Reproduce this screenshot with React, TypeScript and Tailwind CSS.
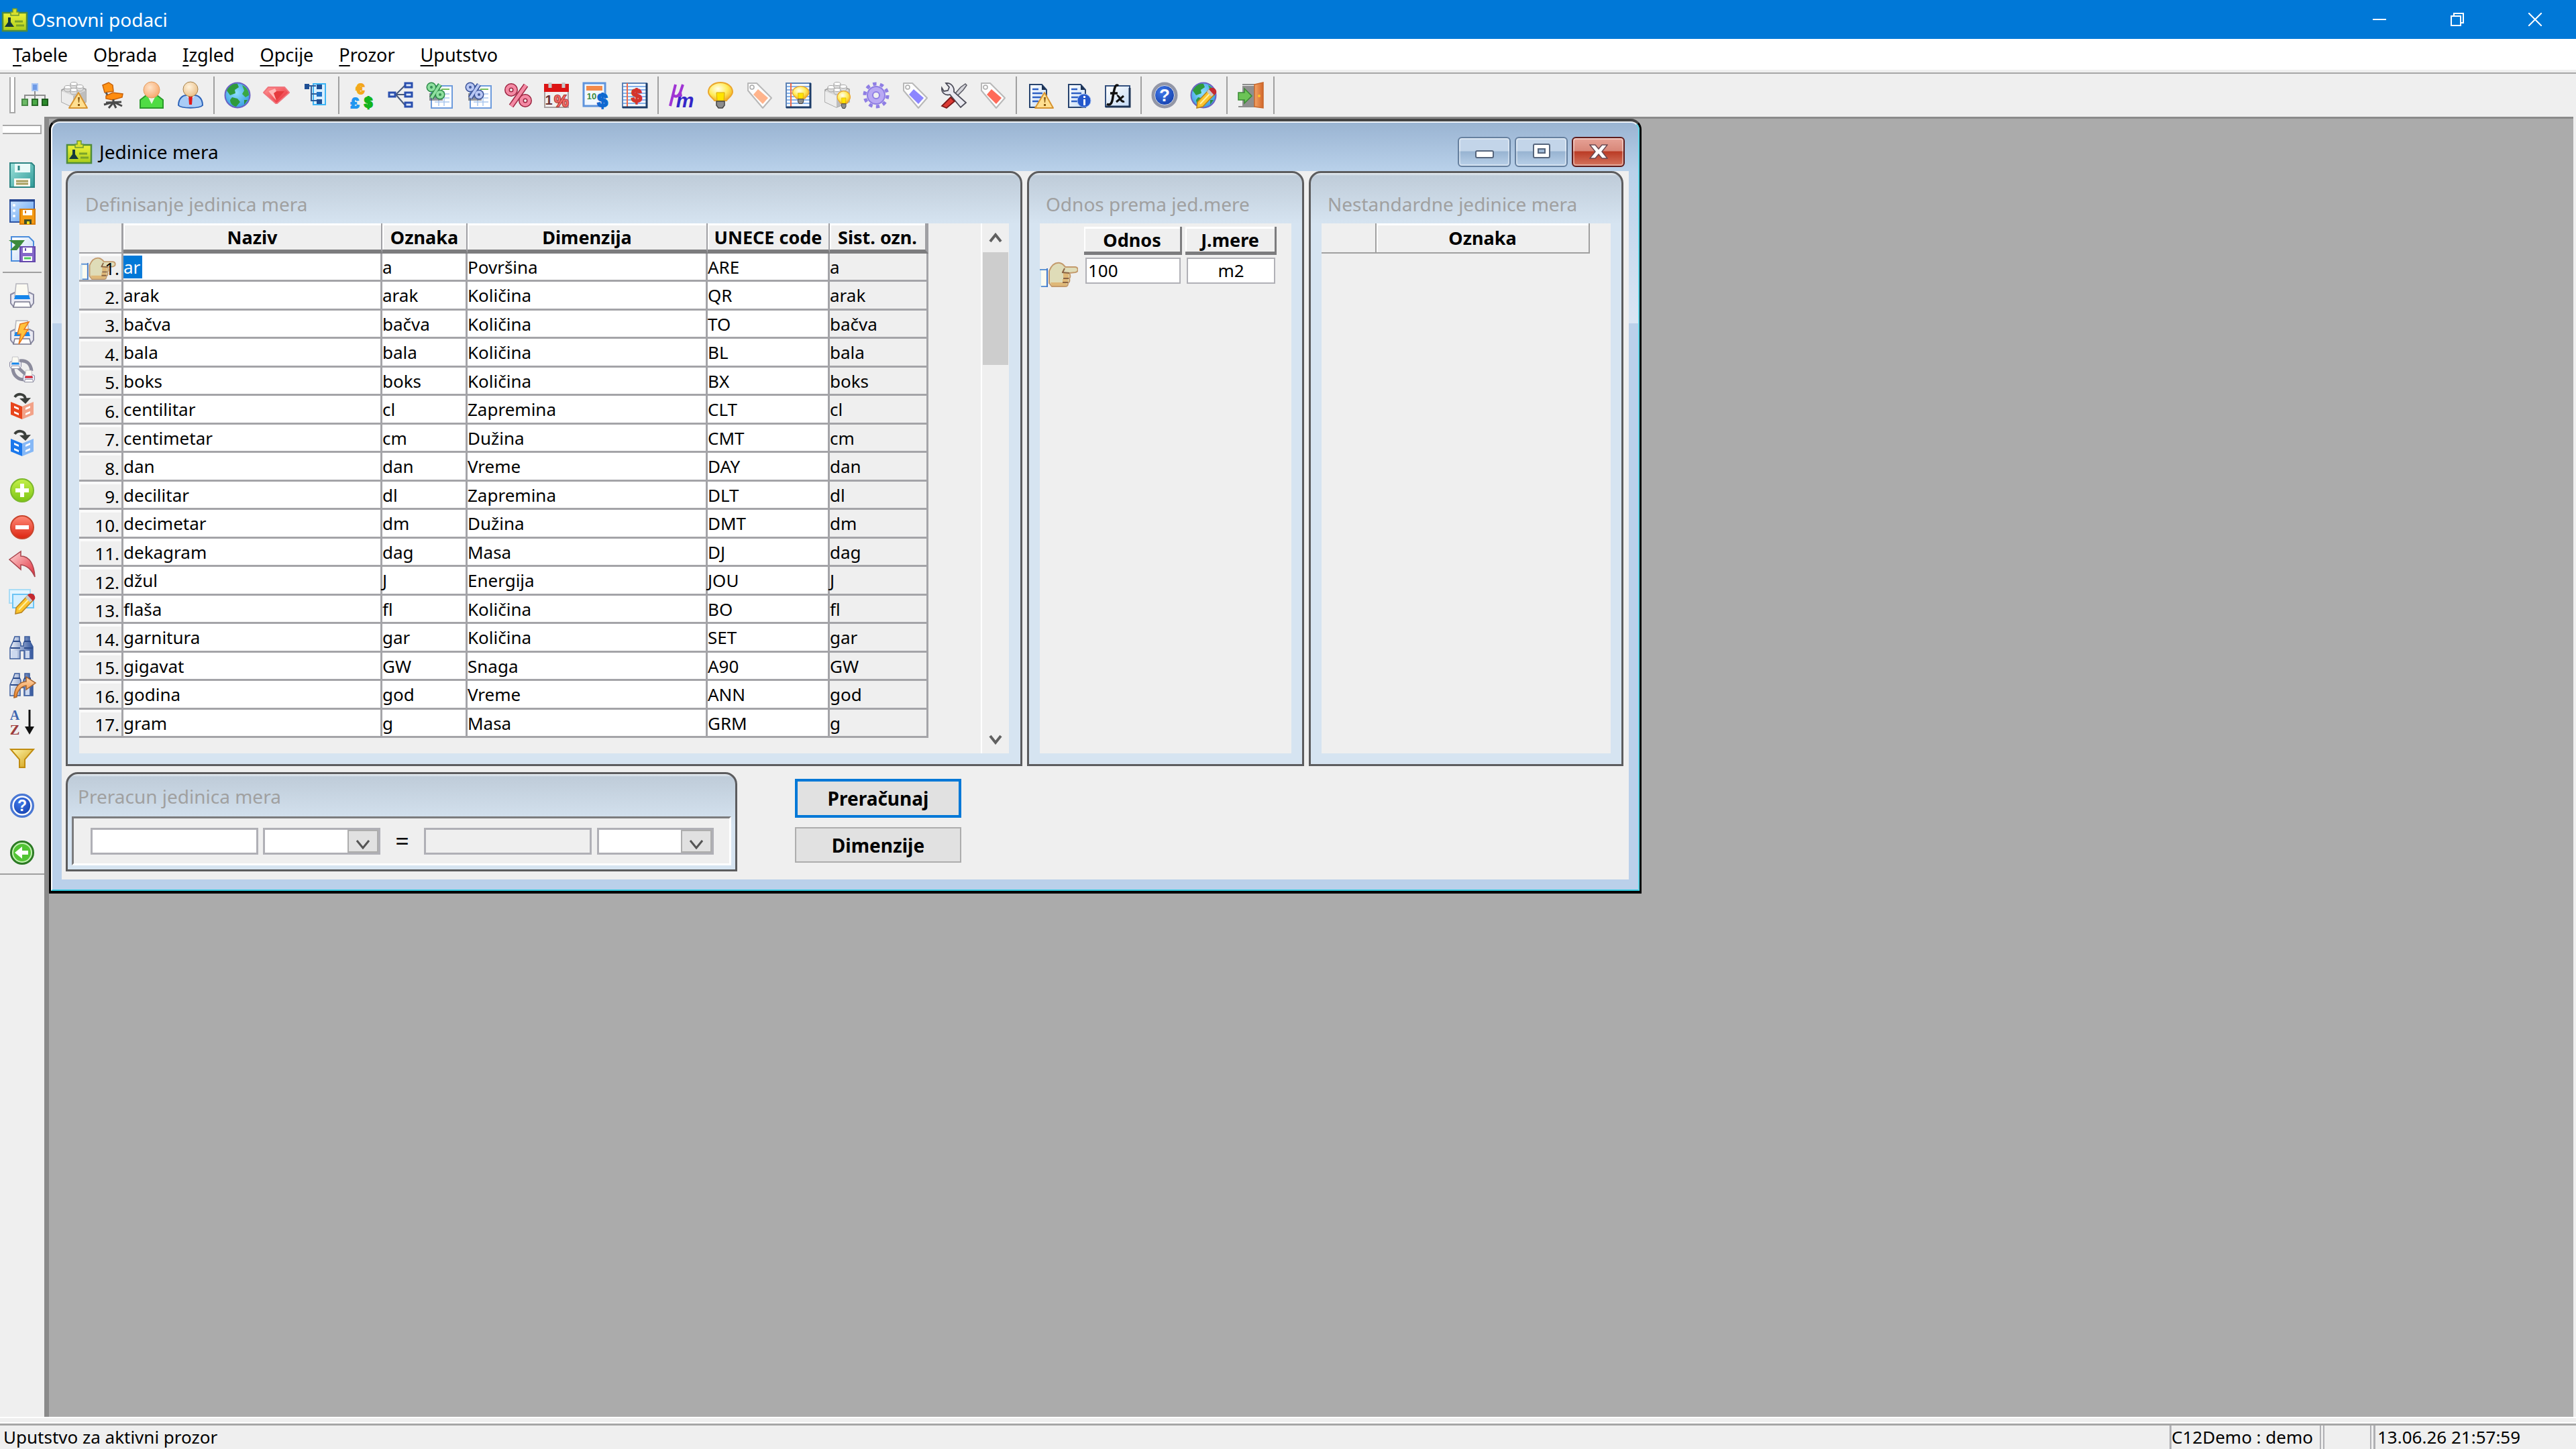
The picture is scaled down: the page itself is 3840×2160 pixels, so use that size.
import React from 'react';

function classNames(...classes: string[]) {
    return classes.filter(Boolean).join(' ')
}

/* ---------- shared icon parts, all drawn on a 40 x 40 grid ---------- */

const GradientDefs = () => (
    <svg className="absolute size-0" aria-hidden="true">
        <defs>
            <radialGradient id="skin" cx=".4" cy=".35" r=".7"><stop offset="0" stopColor="#ffe3c8" /><stop offset="1" stopColor="#f6a66a" /></radialGradient>
            <radialGradient id="face" cx=".4" cy=".35" r=".7"><stop offset="0" stopColor="#fff3dd" /><stop offset="1" stopColor="#e9bd84" /></radialGradient>
            <radialGradient id="bulb" cx=".4" cy=".35" r=".65"><stop offset="0" stopColor="#fffef0" /><stop offset=".6" stopColor="#ffec5a" /><stop offset="1" stopColor="#f5b62a" /></radialGradient>
            <radialGradient id="ocean" cx=".45" cy=".4" r=".6"><stop offset="0" stopColor="#8fe0ff" /><stop offset="1" stopColor="#3a9ee0" /></radialGradient>
            <radialGradient id="helpBlue" cx=".4" cy=".35" r=".7"><stop offset="0" stopColor="#3f78ea" /><stop offset="1" stopColor="#0f3aa6" /></radialGradient>
            <linearGradient id="lime" x2="0" y2="1"><stop offset="0" stopColor="#c4f04a" /><stop offset="1" stopColor="#7cc414" /></linearGradient>
            <linearGradient id="redBall" x2="0" y2="1"><stop offset="0" stopColor="#ff8a78" /><stop offset="1" stopColor="#dd2410" /></linearGradient>
            <linearGradient id="gem" x2="1" y2="1"><stop offset="0" stopColor="#ff9a9a" /><stop offset="1" stopColor="#e8202c" /></linearGradient>
            <linearGradient id="paper" x2="1" y2="1"><stop offset="0" stopColor="#ffffff" /><stop offset="1" stopColor="#c3daf5" /></linearGradient>
            <linearGradient id="steel" x2="1"><stop offset="0" stopColor="#f2f5fb" /><stop offset="1" stopColor="#33569e" /></linearGradient>
            <linearGradient id="gold" x2="1" y2="1"><stop offset="0" stopColor="#fff7b0" /><stop offset="1" stopColor="#d09a08" /></linearGradient>
            <linearGradient id="orangeArrow" x2="0" y2="1"><stop offset="0" stopColor="#ffd9b0" /><stop offset="1" stopColor="#ea7f22" /></linearGradient>
            <linearGradient id="redArrow" x2="1" y2="1"><stop offset="0" stopColor="#ffd9d9" /><stop offset="1" stopColor="#e02a38" /></linearGradient>
            <linearGradient id="teal" x2="1" y2="1"><stop offset="0" stopColor="#9fe3dc" /><stop offset="1" stopColor="#2f9a98" /></linearGradient>
            <linearGradient id="screen" x2="1" y2="1"><stop offset="0" stopColor="#cfe6ff" /><stop offset="1" stopColor="#5d9ef0" /></linearGradient>
            <linearGradient id="badge" x2="0" y2="1"><stop offset="0" stopColor="#eef23a" /><stop offset="1" stopColor="#a8cc1c" /></linearGradient>
            <linearGradient id="door" x2="1"><stop offset="0" stopColor="#f4a466" /><stop offset="1" stopColor="#d2662a" /></linearGradient>
        </defs>
    </svg>
)

const Glyph = ({ x, y, size, fill, stroke, italic, children }: { x: number, y: number, size: number, fill: string, stroke?: string, italic?: boolean, children: React.ReactNode }) => (
    <text
        x={x}
        y={y}
        fontSize={size}
        fill={fill}
        stroke={stroke}
        strokeWidth={stroke ? 2 : 0}
        paintOrder="stroke"
        fontWeight={700}
        fontStyle={italic ? 'italic' : 'normal'}
        fontFamily="Liberation Sans, sans-serif"
        textAnchor="middle"
    >
        {children}
    </text>
)

const Warning = () => (
    <>
        <path d="M27 16 L40 39 H13 Z" fill="#ffdf90" stroke="#d79430" strokeWidth="2" strokeLinejoin="round" />
        <path d="M26 23 h3 l-1 8 h-1 Z M26 33 h3 v3 h-3 Z" fill="#8a5a10" />
    </>
)

const Bulb = () => (
    <>
        <path d="M20 1 C10 1 2 7 2 15 C2 21 8 23 11 28 H29 C32 23 38 21 38 15 C38 7 30 1 20 1 Z" fill="url(#bulb)" stroke="#eba62c" strokeWidth="2" />
        <path d="M14 16 H26 L25 28 H15 Z" fill="#ffe400" stroke="#d8a800" />
        <path d="M14 29 H26 V35 L23 39 H17 L14 35 Z" fill="#8d8d8d" stroke="#444" strokeWidth="1.5" />
    </>
)

const Bricks = () => (
    <>
        <path d="M2 12 L20 4 L38 11 V30 L19 38 L2 30 Z" fill="#d9d9d9" stroke="#9a9a9a" strokeWidth="1.5" />
        <path d="M2 14 L19 21 V38 L2 30 Z" fill="#ececec" />
        <path d="M19 21 L38 13 V30 L19 38 Z" fill="#bdbdbd" />
        {[[11, 10], [20, 5], [29, 9], [20, 14]].map(([cx, cy]) => (
            <g key={`${cx}-${cy}`} stroke="#a8a8a8">
                <path d={`M${cx - 5} ${cy - 2} v4 a5 3 0 0 0 10 0 v-4 Z`} fill="#dcdcdc" />
                <ellipse cx={cx} cy={cy - 2} rx="5" ry="2.5" fill="#fff" />
            </g>
        ))}
    </>
)

const Tag = ({ color }: { color: string }) => (
    <>
        <path d="M3 2 H16 L38 24 L25 39 L3 13 Z" fill="#fdfdfd" stroke="#b8b8b8" strokeWidth="2" strokeLinejoin="round" />
        <circle cx="9" cy="8" r="3" fill="#fff" stroke="#aaa" strokeWidth="1.5" />
        <path d="M18 11 L33 24 L25 33 L11 19 Z" fill={color} />
    </>
)

const Sheet = () => (
    <>
        <rect x="7" y="6" width="31" height="33" fill="#fff" stroke="#6d9bdc" strokeWidth="2" />
        <path d="M12 18 H34 M12 24 H34 M12 30 H34 M18 14 V36 M26 14 V36" stroke="#a9c6ee" strokeWidth="1.5" />
        <path d="M22 11 H34" stroke="#79bf5c" strokeWidth="2" />
    </>
)

const Notebook = () => (
    <>
        <rect x="2" y="2" width="36" height="36" fill="#f4f9ff" stroke="#5d82b4" strokeWidth="2" />
        <path d="M3 7 H37 M3 12 H37 M3 17 H37 M3 22 H37 M3 27 H37 M3 32 H37" stroke="#86b2ea" strokeWidth="2" />
        <path d="M9 2 V38" stroke="#ee6a4a" strokeWidth="2" />
        <path d="M2 38 H38 V2" stroke="#1d3c68" strokeWidth="3" fill="none" />
    </>
)

const Document = () => (
    <>
        <path d="M5 4 H23 L30 12 V38 H5 Z" fill="url(#paper)" stroke="#27436e" strokeWidth="2" />
        <path d="M23 4 V12 H30 Z" fill="#1d3355" />
        <path d="M9 11 H18 M9 17 H24 M9 23 H24 M9 29 H18" stroke="#2d60c4" strokeWidth="2.5" />
    </>
)

const Earth = () => (
    <>
        <circle cx="20" cy="20" r="18.5" fill="url(#ocean)" stroke="#6a62c4" strokeWidth="2" />
        <path d="M4 13 C8 5 15 2 20 3 L22 8 L16 12 L17 17 L9 20 Z" fill="#2f9a3c" />
        <path d="M27 5 C34 8 37 14 37 20 L32 23 L27 18 L30 13 Z" fill="#39a845" />
        <path d="M12 23 L20 25 L24 30 L18 37 C12 36 9 31 9 27 Z" fill="#2f9a3c" />
        <path d="M30 27 L35 27 L30 34 Z" fill="#2f8a3c" />
    </>
)

const Pencil = () => (
    <>
        <path d="M11 30 L28 12 L36 19 L19 37 L10 39 Z" fill="#fbc42e" stroke="#b7821c" strokeWidth="1.5" />
        <path d="M15 33 L31 16" stroke="#fff0a0" strokeWidth="2" />
        <path d="M25 15 L28 11 L36 18 L32 22 Z" fill="#c9c9c9" />
        <path d="M28 11 C32 6 41 10 39 17 L36 20 Z" fill="#c42a30" />
    </>
)

const Printer = () => (
    <>
        <path d="M3 18 L9 15 H31 L37 18 V31 L33 36 H7 L3 31 Z" fill="#e9e9f2" stroke="#8b8ba4" strokeWidth="2" />
        <path d="M11 2 H28 L30 21 H9 Z" fill="#fbfaf2" stroke="#b4b4bc" strokeWidth="1.5" />
        <path d="M10 19 H30 L32 25 H8 Z" fill="#1686ea" />
        <path d="M9 29 H31 L33 37 H7 Z" fill="#fff" stroke="#77778c" strokeWidth="1.5" />
    </>
)

const Binoculars = () => (
    <>
        <path d="M9 3 H16 V9 L18 13 V17 H22 V13 L24 9 V3 H31 V9 L36 18 V36 H23 V24 H17 V36 H2 V20 L7 9 Z" fill="url(#steel)" stroke="#3b5c9c" strokeWidth="1.5" />
        <path d="M7 10 H17 M23 10 H33 M3 20 H17 M23 20 H36" stroke="#2b4a8a" strokeWidth="2" />
        <rect x="4" y="24" width="9" height="11" fill="#cdd9ef" />
        <rect x="25" y="24" width="6" height="11" fill="#cdd9ef" />
    </>
)

const Book = ({ dark, light }: { dark: string, light: string }) => (
    <>
        <path d="M3 13 L20 20 V39 L3 32 Z" fill={dark} />
        <path d="M20 20 L37 13 V32 L20 39 Z" fill={light} />
        <path d="M8 19 L15 22 V25 L8 22 Z M8 27 L15 30 V33 L8 30 Z M25 22 L32 19 V22 L25 25 Z M25 30 L32 27 V30 L25 33 Z" fill="#fff" />
        <path d="M9 6 C13 0 24 0 25 9" fill="none" stroke="#3b3f3b" strokeWidth="4" />
        <path d="M16 8 L33 7 L25 16 Z" fill="#3b3f3b" />
    </>
)

const Percent = ({ color, dark }: { color: string, dark: string }) => (
    <>
        <rect x="4" y="17" width="20" height="11" fill="#3c3f4c" opacity=".55" />
        <g fill="none" stroke={dark} strokeWidth="7">
            <circle cx="7" cy="8" r="4" /><circle cx="20" cy="19" r="4" /><path d="M20 4 L7 24" />
        </g>
        <g fill="none" stroke={color} strokeWidth="4">
            <circle cx="7" cy="8" r="4" /><circle cx="20" cy="19" r="4" /><path d="M20 4 L7 24" />
        </g>
    </>
)

const BadgeMark = () => (
    <>
        <path d="M2 10 H38 V37 H2 Z" fill="url(#badge)" stroke="#4f8c3c" strokeWidth="2.5" />
        <path d="M17 4 H23 V9 H26 V14 H14 V9 H17 Z" fill="#d8e02c" stroke="#6d9a34" strokeWidth="1.5" />
        <path d="M10 17 H14 V24 L19 31 H5 L10 24 Z" fill="#15383c" />
        <path d="M20 23 H32 M22 29 H34" stroke="#7ba32a" strokeWidth="3" />
    </>
)

/* ---------- icons ---------- */

const icons: Record<string, React.ReactNode> = {
    badge: <BadgeMark />,
    org: (
        <>
            <path d="M20 13 V21 M5 25 V20 H35 V25 M20 20 V26" stroke="#8f8f8f" strokeWidth="2" fill="none" />
            <rect x="16" y="3" width="8" height="10" fill="#6f9be6" stroke="#a9c6f4" strokeWidth="2" />
            <rect x="1" y="26" width="8" height="9" fill="#6cba66" stroke="#4a8a48" strokeWidth="2" />
            <rect x="16" y="26" width="8" height="9" fill="#4caa48" stroke="#2b6c2a" strokeWidth="2" />
            <rect x="31" y="26" width="8" height="9" fill="#2c8a2c" stroke="#1e5c1e" strokeWidth="2" />
        </>
    ),
    bricksWarning: <><Bricks /><Warning /></>,
    chair: (
        <>
            <path d="M5 5 L14 1 L20 5 L21 14 L8 16 Z" fill="#ff9416" stroke="#c8620a" strokeWidth="1.5" />
            <path d="M10 16 L14 23 H20" stroke="#555" strokeWidth="3" fill="none" />
            <path d="M10 21 L20 16 L35 18 L34 23 L20 27 L10 25 Z" fill="#ff8c10" stroke="#c8620a" strokeWidth="1.5" />
            <path d="M21 26 V33 M7 34 L21 30 L34 36 M14 39 L21 31 L25 39 M10 31 L33 30" stroke="#4a4a4a" strokeWidth="3" fill="none" />
        </>
    ),
    personGreen: (
        <>
            <path d="M3 39 V27 L12 20 H28 L37 27 V39 Z" fill="#4fdc44" stroke="#2a9a2a" strokeWidth="2" />
            <path d="M15 23 H25 L20 33 Z" fill="#e9f6e4" />
            <ellipse cx="20" cy="12" rx="12" ry="12" fill="url(#skin)" stroke="#e49a5c" strokeWidth="1" />
        </>
    ),
    personTie: (
        <>
            <path d="M2 35 C2 25 8 20 14 20 H26 C32 20 38 25 38 35 C34 40 6 40 2 35 Z" fill="#a9ccf6" stroke="#2d63b8" strokeWidth="2" />
            <path d="M14 21 L20 27 L26 21 Z" fill="#fff" />
            <path d="M17 21 H23 L22 34 H18 Z" fill="#e01a1a" />
            <circle cx="20" cy="11" r="11" fill="url(#face)" stroke="#a5834e" strokeWidth="1" />
        </>
    ),
    globe: <Earth />,
    gem: (
        <>
            <path d="M8 8 H32 L39 16 L21 32 H19 L1 16 Z" fill="url(#gem)" stroke="#f0747c" strokeWidth="2" strokeLinejoin="round" />
            <path d="M8 14 H32 L20 28 Z" fill="#e63a3e" />
            <path d="M8 14 L18 10 L20 14 L16 17 L20 28 Z" fill="#ffb9b9" />
        </>
    ),
    tree: (
        <>
            <rect x="17" y="3" width="18" height="31" fill="#d9efff" stroke="#3db4f4" strokeWidth="2" />
            <path d="M9 6 H21 M14 6 V28 H22 M14 18 H22" stroke="#2e5c98" strokeWidth="2" fill="none" />
            <rect x="4" y="3" width="7" height="8" fill="#1f4f94" />
            <rect x="22" y="4" width="8" height="7" fill="#1f4f94" />
            <rect x="22" y="15" width="8" height="7" fill="#1f6fc4" />
            <rect x="22" y="26" width="8" height="7" fill="#1f4f94" />
        </>
    ),
    money: (
        <>
            <Glyph x={17} y={18} size={22} fill="#f3a81c" stroke="#f3a81c">€</Glyph>
            <Glyph x={9} y={39} size={22} fill="#2196f0" stroke="#2196f0">£</Glyph>
            <Glyph x={29} y={38} size={22} fill="#14b41c" stroke="#14b41c">$</Glyph>
        </>
    ),
    nodes: (
        <>
            <path d="M10 19 H26 M12 19 L26 5 M12 19 L26 35" stroke="#47597c" strokeWidth="2" />
            <g fill="#dbe7fb" stroke="#2a4fae" strokeWidth="3">
                <rect x="2" y="16" width="9" height="6" /><rect x="26" y="2" width="10" height="6" />
                <rect x="26" y="16" width="10" height="6" /><rect x="26" y="31" width="10" height="6" />
            </g>
        </>
    ),
    percentGreen: <><Sheet /><Percent color="#8fe0a0" dark="#2c8a48" /></>,
    percentBlue: <><Sheet /><Percent color="#b9c8f4" dark="#3a5298" /></>,
    percentRed: (
        <>
            <g fill="none" stroke="#9c2440" strokeWidth="8">
                <circle cx="10" cy="12" r="6" /><circle cx="31" cy="28" r="6" /><path d="M32 5 L10 36" />
            </g>
            <g fill="none" stroke="#f48aa4" strokeWidth="5">
                <circle cx="10" cy="12" r="6" /><circle cx="31" cy="28" r="6" /><path d="M32 5 L10 36" />
            </g>
        </>
    ),
    calendarPercent: (
        <>
            <rect x="2" y="4" width="35" height="34" fill="#f1efef" stroke="#a9a1a1" strokeWidth="2" />
            <rect x="1" y="3" width="37" height="12" fill="#dc1414" />
            <path d="M10 1 V9 M30 1 V9" stroke="#c8c8c8" strokeWidth="5" />
            <Glyph x={8} y={34} size={20} fill="#6a3434">1</Glyph>
            <Glyph x={27} y={37} size={24} fill="#f46a64" stroke="#a03030">%</Glyph>
        </>
    ),
    calendarDollar: (
        <>
            <rect x="2" y="2" width="32" height="34" fill="#f2f8ff" stroke="#5f94dc" strokeWidth="3" />
            <rect x="6" y="6" width="24" height="7" fill="#f38a4a" />
            <Glyph x={14} y={26} size={13} fill="#3f8a3c">10</Glyph>
            <Glyph x={30} y={37} size={28} fill="#0f68d0" stroke="#0f68d0">$</Glyph>
        </>
    ),
    bookDollar: <><Notebook /><Glyph x={23} y={30} size={28} fill="#d4342c" stroke="#d4342c">$</Glyph></>,
    micro: (
        <>
            <path d="M3 36 L11 4 M8 20 C12 24 16 20 18 16 L22 4 M18 16 L19 22" stroke="#a034d4" strokeWidth="4" fill="none" />
            <Glyph x={25} y={38} size={30} fill="#3426c8" italic>m</Glyph>
        </>
    ),
    bulb: <Bulb />,
    tagOrange: <Tag color="#ffb48c" />,
    bookBulb: <><Notebook /><g transform="translate(10 6) scale(.68)"><Bulb /></g></>,
    bricksBulb: <><Bricks /><g transform="translate(19 13) scale(.54 .68)"><Bulb /></g></>,
    gear: (
        <>
            <circle cx="20" cy="20" r="17" fill="none" stroke="#8f7ee4" strokeWidth="5" strokeDasharray="5.4 5.28" />
            <circle cx="20" cy="20" r="13" fill="#b9a9f4" stroke="#8f7ee4" strokeWidth="2" />
            <circle cx="20" cy="20" r="5" fill="#efefef" stroke="#8f7ee4" strokeWidth="2" />
        </>
    ),
    tagBlue: <Tag color="#8c86ff" />,
    tools: (
        <>
            <path d="M37 3 L30 8 L16 24 L19 27 L34 12 L39 5 Z" fill="#d4d4da" stroke="#5a5a64" strokeWidth="1.5" />
            <path d="M8 2 L13 8 L11 13 L5 14 L2 9 C1 16 7 21 14 19 L30 38 L38 31 L20 15 C21 8 16 1 8 2 Z" fill="#e9e9f0" stroke="#4c4c58" strokeWidth="1.8" />
            <path d="M15 23 L21 29 L9 39 L2 36 Z" fill="#dc3a34" stroke="#7c1a1a" strokeWidth="1.8" />
        </>
    ),
    tagRed: <Tag color="#ff6a58" />,
    docWarning: <><Document /><Warning /></>,
    docInfo: <><Document /><circle cx="28" cy="28" r="10" fill="#2458cc" stroke="#9ab8f0" /><path d="M27 21 h3 v3 h-3 Z M27 26 h3 v9 h-3 Z" fill="#fff" /></>,
    formula: (
        <>
            <rect x="2" y="6" width="36" height="31" fill="url(#paper)" stroke="#33507e" strokeWidth="2" />
            <path d="M2 37 H38 V9" stroke="#1d3355" strokeWidth="3" fill="none" />
            <path d="M21 6 C16 2 15 12 13 22 C12 32 9 36 4 33 M9 17 H20" stroke="#111" strokeWidth="3.5" fill="none" />
            <path d="M19 21 C23 19 24 32 30 29 M29 21 L18 30" stroke="#111" strokeWidth="3" fill="none" />
        </>
    ),
    help: (
        <>
            <circle cx="20" cy="20" r="17" fill="url(#helpBlue)" stroke="#9296a6" strokeWidth="5" />
            <circle cx="20" cy="20" r="14.5" fill="none" stroke="#d9deea" />
            <Glyph x={20} y={29} size={26} fill="#fff">?</Glyph>
        </>
    ),
    globePencil: <><Earth /><Pencil /></>,
    exit: (
        <>
            <path d="M8 4 H30 V37 H2" fill="none" stroke="#8c8c8c" strokeWidth="2" />
            <rect x="8" y="6" width="19" height="31" fill="#8f8f8f" />
            <path d="M26 4 L39 1 V39 L26 37 Z" fill="url(#door)" stroke="#c8682c" strokeWidth="1.5" />
            <circle cx="33" cy="21" r="2" fill="#ffc42c" />
            <path d="M2 16 H11 V10 L22 21 L11 32 V27 H2 Z" fill="#6cc456" stroke="#3a8a34" strokeWidth="1.5" />
        </>
    ),
    save: (
        <>
            <path d="M2 2 H34 L38 6 V38 H2 Z" fill="url(#teal)" stroke="#2b8482" strokeWidth="2" />
            <path d="M9 3 H32 V16 H9 Z" fill="#eafaf8" />
            <path d="M15 6 V13" stroke="#2b8482" strokeWidth="3" />
            <rect x="8" y="25" width="24" height="12" fill="#fbfbf4" />
            <path d="M11 29 H29 M11 33 H29" stroke="#a8a060" strokeWidth="3" />
        </>
    ),
    saveLayout: (
        <>
            <rect x="2" y="2" width="36" height="33" fill="url(#screen)" stroke="#2f55a4" strokeWidth="2" />
            <path d="M1 3 H39" stroke="#24448c" strokeWidth="3" />
            <circle cx="8" cy="10" r="2" fill="#fff" /><circle cx="8" cy="18" r="2" fill="#fff" /><circle cx="8" cy="26" r="2" fill="#fff" />
            <rect x="17" y="16" width="22" height="22" fill="#f39a14" stroke="#d87c08" strokeWidth="2" />
            <rect x="21" y="17" width="14" height="8" fill="#fff" /><rect x="24" y="18" width="2" height="4" fill="#e07a10" />
            <rect x="23" y="31" width="11" height="7" fill="#40502c" /><rect x="27" y="34" width="4" height="4" fill="#f4e01c" />
        </>
    ),
    saveExcel: (
        <>
            <path d="M4 2 H30 L37 9 V38 H4 Z" fill="url(#paper)" stroke="#4a8cdc" strokeWidth="2" />
            <path d="M0 7 H24 L12 22 H2 L10 14 Z" fill="#3c8a3c" />
            <rect x="17" y="17" width="22" height="22" fill="#8468c8" stroke="#6448ac" strokeWidth="2" />
            <rect x="21" y="18" width="14" height="8" fill="#fff" /><rect x="24" y="19" width="2" height="4" fill="#6448ac" />
            <rect x="21" y="31" width="14" height="7" fill="#fff" /><path d="M23 34 H33" stroke="#4cc85c" strokeWidth="3" />
        </>
    ),
    print: <Printer />,
    printFast: <><Printer /><path d="M17 7 L30 4 L23 15 H29 L15 37 L18 22 H13 Z" fill="#ffc23c" stroke="#e8761c" strokeWidth="1.5" /></>,
    printSwap: (
        <>
            <path d="M16 7 C27 5 33 12 34 22 M6 19 C7 29 14 35 23 35 M14 17 L25 27" stroke="#8b8b9c" strokeWidth="5" fill="none" />
            <g transform="scale(.5)"><Printer /></g>
            <g transform="translate(20 20) scale(.5)"><Printer /><path d="M10 19 H30 L32 25 H8 Z" fill="#e8262c" /></g>
        </>
    ),
    bookRed: <Book dark="#e8451c" light="#f2a288" />,
    bookBlue: <Book dark="#1b78ec" light="#86b8f6" />,
    add: (
        <>
            <circle cx="20" cy="20" r="17" fill="url(#lime)" stroke="#7cb82c" strokeWidth="2" />
            <path d="M20 10 V30 M10 20 H30" stroke="#fff" strokeWidth="6" />
        </>
    ),
    remove: (
        <>
            <circle cx="20" cy="20" r="17" fill="url(#redBall)" stroke="#c8442c" strokeWidth="2" />
            <rect x="10" y="17" width="20" height="6" fill="#fff" />
        </>
    ),
    undo: <path d="M1 13 L18 1 V8 C32 8 38 22 39 39 C34 28 28 22 18 21 V28 Z" fill="url(#redArrow)" stroke="#a8444c" strokeWidth="1.5" />,
    edit: (
        <>
            <rect x="1" y="3" width="31" height="20" fill="#e4f5ff" stroke="#a9dcf6" strokeWidth="2" />
            <rect x="6" y="10" width="31" height="20" fill="#d4efff" stroke="#6cc4f4" strokeWidth="2" />
            <Pencil />
        </>
    ),
    find: <Binoculars />,
    findNext: <><Binoculars /><path d="M8 39 C8 24 16 15 26 15 V8 L40 17 L26 27 V21 C18 22 12 30 12 38 Z" fill="url(#orangeArrow)" stroke="#a8642c" strokeWidth="1.5" /></>,
    sort: (
        <>
            <text x="9" y="17" fontSize="20" fontWeight="700" fill="#3f66b0" textAnchor="middle" fontFamily="Liberation Serif, serif">A</text>
            <text x="9" y="39" fontSize="22" fontWeight="700" fill="#9c3c3c" textAnchor="middle" fontFamily="Liberation Serif, serif">Z</text>
            <path d="M31 2 V34" stroke="#111" strokeWidth="3" />
            <path d="M24 27 H38 L31 39 Z" fill="#111" />
        </>
    ),
    filter: <path d="M3 6 H37 L24 21 V33 H16 V21 Z" fill="url(#gold)" stroke="#c08c10" strokeWidth="2" />,
    helpRing: (
        <>
            <circle cx="20" cy="20" r="16.5" fill="url(#helpBlue)" stroke="#4a78d4" strokeWidth="3" />
            <circle cx="20" cy="20" r="13.5" fill="none" stroke="#fff" strokeWidth="2.5" />
            <Glyph x={20} y={28} size={23} fill="#fff">?</Glyph>
        </>
    ),
    back: (
        <>
            <circle cx="20" cy="20" r="16.5" fill="#52c434" stroke="#2c7a24" strokeWidth="3" />
            <circle cx="20" cy="20" r="14" fill="none" stroke="#c4f0b4" strokeWidth="2" />
            <path d="M9 20 L20 11 V17 H29 V23 H20 V29 Z" fill="#fff" />
        </>
    ),
}

const Icon = ({ name }: { name: string }) => (
    <svg viewBox="0 0 40 40" className="size-10 overflow-visible" aria-hidden="true">{icons[name]}</svg>
)

const PointingHand = ({ className }: { className: string }) => (
    <svg viewBox="0 0 57 38" className={className} aria-hidden="true">
        <path d="M0 13 H9 V38 H0 Z" fill="#fbfbf0" />
        <path d="M0 12 H10 M0 37 H10" stroke="#5f94d4" strokeWidth="2" />
        <path d="M0 13 V38" stroke="#cfe4f4" strokeWidth="4" />
        <path d="M11 10 V38" stroke="#3f78c8" strokeWidth="2" />
        <path d="M14 14 C18 4 24 1 30 2 C35 3 37 7 38 8 H53 C58 9 58 15 53 16 L44 17 C46 21 46 23 44 25 C45 29 44 31 42 32 C42 36 40 37 38 37 H18 L14 32 Z" fill="#dfdcb8" stroke="#c39a6c" strokeWidth="2" />
        <path d="M35 17 H43 V24 H35 Z M34 26 H42 V31 H34 Z M16 31 H40 V36 H18 Z" fill="#dfb878" />
        <path d="M33 16 L44 17 M35 25 H43 M34 31 H42 M37 10 L34 16" stroke="#8a6444" strokeWidth="2" fill="none" />
    </svg>
)

/* ---------- data ---------- */

const menus = [
    ['', 'T', 'abele'],
    ['O', 'b', 'rada'],
    ['', 'I', 'zgled'],
    ['', 'O', 'pcije'],
    ['', 'P', 'rozor'],
    ['', 'U', 'putstvo'],
]

const topTools = [
    ['org', 'bricksWarning', 'chair', 'personGreen', 'personTie'],
    ['globe', 'gem', 'tree'],
    ['money', 'nodes', 'percentGreen', 'percentBlue', 'percentRed', 'calendarPercent', 'calendarDollar', 'bookDollar'],
    ['micro', 'bulb', 'tagOrange', 'bookBulb', 'bricksBulb', 'gear', 'tagBlue', 'tools', 'tagRed'],
    ['docWarning', 'docInfo', 'formula'],
    ['help', 'globePencil'],
    ['exit'],
]

const sideTools = [
    ['save', 'saveLayout', 'saveExcel'],
    ['print', 'printFast', 'printSwap', 'bookRed', 'bookBlue'],
    ['add', 'remove', 'undo', 'edit'],
    ['find', 'findNext', 'sort', 'filter'],
    ['helpRing'],
    ['back'],
]

const units = [
    ['ar', 'a', 'Površina', 'ARE', 'a'],
    ['arak', 'arak', 'Količina', 'QR', 'arak'],
    ['bačva', 'bačva', 'Količina', 'TO', 'bačva'],
    ['bala', 'bala', 'Količina', 'BL', 'bala'],
    ['boks', 'boks', 'Količina', 'BX', 'boks'],
    ['centilitar', 'cl', 'Zapremina', 'CLT', 'cl'],
    ['centimetar', 'cm', 'Dužina', 'CMT', 'cm'],
    ['dan', 'dan', 'Vreme', 'DAY', 'dan'],
    ['decilitar', 'dl', 'Zapremina', 'DLT', 'dl'],
    ['decimetar', 'dm', 'Dužina', 'DMT', 'dm'],
    ['dekagram', 'dag', 'Masa', 'DJ', 'dag'],
    ['džul', 'J', 'Energija', 'JOU', 'J'],
    ['flaša', 'fl', 'Količina', 'BO', 'fl'],
    ['garnitura', 'gar', 'Količina', 'SET', 'gar'],
    ['gigavat', 'GW', 'Snaga', 'A90', 'GW'],
    ['godina', 'god', 'Vreme', 'ANN', 'god'],
    ['gram', 'g', 'Masa', 'GRM', 'g'],
]

/* ---------- application frame ---------- */

function TitleBar() {
    return (
        <header className="flex h-[58px] items-center bg-[#0078d7] pl-[2px] pr-[3px] text-white">
            <Icon name="badge" />
            <h1 className="ml-[5px] flex-1 text-[28px] leading-[38px]">Osnovni podaci</h1>
            <button aria-label="Minimize" className="flex h-[58px] w-[116px] items-center justify-center">
                <svg viewBox="0 0 20 20" className="size-5"><path d="M0 10 H20" stroke="#fff" strokeWidth="2" /></svg>
            </button>
            <button aria-label="Restore" className="flex h-[58px] w-[116px] items-center justify-center">
                <svg viewBox="0 0 20 20" className="size-5" fill="none" stroke="#fff" strokeWidth="2"><path d="M1 5 H15 V19 H1 Z M5 5 V1 H19 V15 H15" /></svg>
            </button>
            <button aria-label="Close" className="flex h-[58px] w-[116px] items-center justify-center">
                <svg viewBox="0 0 20 20" className="size-5"><path d="M0 0 L20 20 M20 0 L0 20" stroke="#fff" strokeWidth="2" /></svg>
            </button>
        </header>
    )
}

function MenuBar() {
    return (
        <nav className="flex h-[46px] items-center bg-white pt-[2px] text-[27px] leading-[36px]">
            {menus.map(([before, key, after]) => (
                <button key={key + after} className="px-[19px]">
                    {before}<span className="underline decoration-2 underline-offset-[5px]">{key}</span>{after}
                </button>
            ))}
        </nav>
    )
}

function TopToolbar() {
    return (
        <div role="toolbar" aria-label="Tabele" className="mt-[4px] flex h-[66px] items-center border-t-2 border-[#a6a6a6] bg-[#efefef] pl-[14px]">
            <div className="h-[54px] w-[9px] border-x-2 border-b-2 border-[#a8a8a8] bg-white" />
            {topTools.map((group) => (
                <div key={group[0]} className="flex items-center">
                    {group.map((name) => (
                        <button key={name} aria-label={name} className="flex h-[58px] w-[58px] items-center justify-center">
                            <Icon name={name} />
                        </button>
                    ))}
                    <div className="flex h-[56px] w-[12px] justify-center"><div className="w-[2px] bg-[#a0a0a0]" /></div>
                </div>
            ))}
        </div>
    )
}

function SideToolbar() {
    return (
        <div role="toolbar" aria-label="Obrada" className="flex w-[66px] flex-col items-center self-start border-b-2 border-[#a0a0a0] bg-[#efefef] pb-[4px] pt-[12px]">
            <div className="mb-[33px] h-[14px] w-[58px] border-y-2 border-r-2 border-[#a8a8a8] bg-white" />
            {sideTools.map((group, index) => (
                <React.Fragment key={group[0]}>
                    {index > 0 && (
                        <div className="flex h-[15px] w-[58px] flex-col justify-center">
                            {index === 1 && <div className="h-[2px] bg-[#a0a0a0]" />}
                        </div>
                    )}
                    {group.map((name) => (
                        <button key={name} aria-label={name} className="flex h-[55px] w-[58px] items-center justify-center">
                            <Icon name={name} />
                        </button>
                    ))}
                </React.Fragment>
            ))}
        </div>
    )
}

function StatusBar() {
    return (
        <footer className="flex h-[38px] items-stretch border-t-[3px] border-[#a6a6a6] bg-[#efefef] text-[26px] leading-[34px]">
            <p className="flex-1 pl-[5px]">Uputstvo za aktivni prozor</p>
            <p className="w-[226px] border-l-[3px] border-r-2 border-[#b0b0b4]">C12Demo : demo</p>
            <p className="ml-[3px] w-[72px] border-x-2 border-[#b0b0b4]" />
            <p className="ml-[3px] w-[302px] border-l-[3px] border-[#b0b0b4] pl-[3px]">13.06.26 21:57:59</p>
        </footer>
    )
}

/* ---------- child window ---------- */

function Panel({ title, className, titleClassName, children }: { title: string, className: string, titleClassName: string, children: React.ReactNode }) {
    return (
        <section className={classNames('flex flex-col rounded-t-[18px] border-[3px] border-[#5c5c5e] bg-[linear-gradient(#eef2f6_0px,#bfccd9_4px,#d6e4f1_76px)]', className)}>
            <h3 className={classNames('text-[28px] leading-[38px] text-[#a0a0a0]', titleClassName)}>{title}</h3>
            {children}
        </section>
    )
}

function WindowButton({ label, className, children }: { label: string, className: string, children: React.ReactNode }) {
    return (
        <button aria-label={label} className={classNames('flex h-[45px] w-[79px] items-center justify-center rounded-[6px] border-2 shadow-[inset_0_0_0_2px_rgba(255,255,255,0.4)]', className)}>
            <svg viewBox="0 0 28 24" className="h-6 w-7">{children}</svg>
        </button>
    )
}

function UnitsTable() {
    const head = 'border-r-2 border-b-[6px] border-r-[#a0a0a4] border-b-[#7c7c7e] p-0 pt-[3px] text-center font-bold shadow-[inset_2px_3px_0_0_#fff]'
    return (
        <table className="w-[1266px] table-fixed border-separate border-spacing-0 self-start text-[26px] leading-[34px]">
            <colgroup>
                <col className="w-[66px]" />
                <col className="w-[386px]" />
                <col className="w-[127px]" />
                <col className="w-[358px]" />
                <col className="w-[182px]" />
                <col className="w-[147px]" />
            </colgroup>
            <thead>
                <tr className="h-[45px] text-[27px]">
                    <th className="border-b-2 border-r-[3px] border-[#a0a0a4]" />
                    <th className={head}>Naziv</th>
                    <th className={head}>Oznaka</th>
                    <th className={head}>Dimenzija</th>
                    <th className={head}>UNECE code</th>
                    <th className={classNames(head, 'border-r-[5px] border-r-[#7c7c7e]')}>Sist. ozn.</th>
                </tr>
            </thead>
            <tbody>
                {units.map((unit, index) => (
                    <tr key={unit[0]} className="odd:h-[42px] even:h-[43px]">
                        <td className="relative border-b-[3px] border-r-[3px] border-[#a4a4a8] p-0 pt-[5px] pr-[3px] text-right shadow-[inset_2px_4px_0_0_#fafafa]">
                            {index === 0 && <PointingHand className="absolute bottom-0 left-0 h-[34px] w-[57px]" />}
                            <span className="relative">{index + 1}.</span>
                        </td>
                        {unit.map((value, column) => (
                            <td key={column} className={classNames('border-b-[3px] border-r-[3px] border-[#a4a4a8] p-0', column === 4 ? 'bg-[#efefef]' : 'bg-white')}>
                                {index === 0 && column === 0 ? <span className="block w-[28px] bg-[#0078d7] text-white">{value}</span> : value}
                            </td>
                        ))}
                    </tr>
                ))}
            </tbody>
        </table>
    )
}

function UnitSelect({ label, className }: { label: string, className: string }) {
    return (
        <div className={classNames('relative h-[40px] border-[3px] border-[#b0b0b6] bg-white', className)}>
            <select aria-label={label} className="h-full w-full appearance-none bg-white" />
            <span className="pointer-events-none absolute inset-y-0 right-0 flex w-[46px] items-center justify-center border-2 border-[#adadad] bg-[#e1e1e1]">
                <svg viewBox="0 0 20 14" className="mt-[10px] h-[14px] w-5"><path d="M1 1 L10 12 L19 1" fill="none" stroke="#555" strokeWidth="3" /></svg>
            </span>
        </div>
    )
}

function UnitsWindow() {
    const relationHead = 'h-[42px] border-b-[5px] border-r-[3px] border-[#7c7c7e] p-0 pt-[3px] text-center text-[27px] font-bold leading-[34px] shadow-[inset_2px_3px_0_0_#fff]'
    const relationInput = 'block h-[39px] border-2 border-[#b0b0b6] bg-white text-[26px]'
    return (
        <section className="w-[2374px] max-w-full overflow-hidden rounded-t-[16px] border-x-[3px] border-b-[4px] border-t-[4px] border-b-black border-l-black border-r-black border-t-[#444]">
            <div className="rounded-t-[13px] border-2 border-b-[#2fc8dc] border-l-white border-r-[#5fd8e8] border-t-[#eef3f8] bg-[linear-gradient(#9ab4d2_0px,#b9d1ea_72px,#dae6f4_299px,#bad0ea_299px)] px-[14px] pb-[15px]">
                <header className="flex h-[72px] items-center px-[6px] pt-[14px]">
                    <Icon name="badge" />
                    <h2 className="ml-[10px] flex-1 text-[28px] leading-[38px]">Jedinice mera</h2>
                    <div className="flex gap-[6px]">
                        <WindowButton label="Minimize" className="border-[#66809f] bg-[linear-gradient(#c3d5e9_45%,#98b4d2_50%,#b9d0e8)]">
                            <rect x="1" y="11" width="26" height="10" rx="2" fill="#fff" stroke="#55657c" strokeWidth="2" />
                        </WindowButton>
                        <WindowButton label="Maximize" className="border-[#66809f] bg-[linear-gradient(#c3d5e9_45%,#98b4d2_50%,#b9d0e8)]">
                            <rect x="2" y="1" width="24" height="20" rx="2" fill="#fff" stroke="#55657c" strokeWidth="2" />
                            <rect x="9" y="8" width="10" height="6" fill="#9fb9d6" stroke="#55657c" strokeWidth="2" />
                        </WindowButton>
                        <WindowButton label="Close" className="border-[#5e1c1c] bg-[linear-gradient(#e6a296_0%,#d8887a_45%,#bb3c26_50%,#d4745e)]">
                            <path d="M1 2 H9 L14 8 L19 2 H27 L19 12 L27 22 H19 L14 16 L9 22 H1 L9 12 Z" fill="#fff" stroke="#6c4a52" strokeWidth="1.5" />
                        </WindowButton>
                    </div>
                </header>
                <div className="bg-[#efefef] pb-[12px] pl-[6px] pr-[8px]">
                    <div className="flex h-[887px] gap-[7px]">
                        <Panel title="Definisanje jedinica mera" className="w-[1426px] px-[17px] pb-[16px]" titleClassName="h-[75px] pl-[9px] pt-[27px]">
                            <div className="flex min-h-0 flex-1 justify-between bg-[#efefef]">
                                <UnitsTable />
                                <div className="flex w-[42px] flex-col items-center border-l-2 border-white">
                                    <button aria-label="Scroll up" className="flex h-[43px] w-full items-center justify-center">
                                        <svg viewBox="0 0 20 16" className="h-4 w-5"><path d="M2 13 L10 3 L18 13" fill="none" stroke="#606060" strokeWidth="4" /></svg>
                                    </button>
                                    <div className="flex w-full flex-1 flex-col items-center"><div className="h-[168px] w-[38px] bg-[#cdcdcd]" /></div>
                                    <button aria-label="Scroll down" className="flex h-[43px] w-full items-center justify-center">
                                        <svg viewBox="0 0 20 16" className="h-4 w-5"><path d="M2 3 L10 13 L18 3" fill="none" stroke="#606060" strokeWidth="4" /></svg>
                                    </button>
                                </div>
                            </div>
                        </Panel>
                        <Panel title="Odnos prema jed.mere" className="w-[413px] px-[16px] pb-[16px]" titleClassName="h-[75px] pl-[9px] pt-[27px]">
                            <div className="flex-1 bg-[#efefef] pt-[5px]">
                                <table className="border-separate border-spacing-0">
                                    <thead>
                                        <tr>
                                            <td className="w-[66px] p-0" />
                                            <th className={classNames(relationHead, 'w-[146px]')}>Odnos</th>
                                            <td className="w-[5px] p-0" />
                                            <th className={classNames(relationHead, 'w-[136px]')}>J.mere</th>
                                        </tr>
                                    </thead>
                                    <tbody>
                                        <tr>
                                            <td className="p-0 pt-[10px]"><PointingHand className="h-[38px] w-[57px]" /></td>
                                            <td className="p-0 pl-[2px] pt-[4px] align-top"><input aria-label="Odnos" defaultValue="100" className={classNames(relationInput, 'w-[142px] pl-[2px]')} /></td>
                                            <td className="p-0" />
                                            <td className="p-0 pl-[2px] pt-[4px] align-top"><input aria-label="J.mere" defaultValue="m2" className={classNames(relationInput, 'w-[132px] text-center')} /></td>
                                        </tr>
                                    </tbody>
                                </table>
                            </div>
                        </Panel>
                        <Panel title="Nestandardne jedinice mera" className="flex-1 px-[16px] pb-[16px]" titleClassName="h-[75px] pl-[9px] pt-[27px]">
                            <div className="flex-1 bg-[#efefef]">
                                <table className="w-[400px] table-fixed border-separate border-spacing-0">
                                    <thead>
                                        <tr className="h-[45px] text-[27px] leading-[34px]">
                                            <th className="w-[82px] border-b-2 border-r-2 border-[#a0a0a0]" />
                                            <th className="border-b-2 border-r-2 border-[#a0a0a0] p-0 text-center font-bold shadow-[inset_2px_3px_0_0_#fff]">Oznaka</th>
                                        </tr>
                                    </thead>
                                </table>
                            </div>
                        </Panel>
                    </div>
                    <div className="mt-[9px] flex gap-[86px]">
                        <Panel title="Preracun jedinica mera" className="w-[1001px] px-[6px] pb-[6px]" titleClassName="h-[63px] pl-[9px] pt-[14px]">
                            <div className="flex h-[73px] items-center border-[3px] border-b-white border-l-[#7c7c7e] border-r-white border-t-[#7c7c7e] bg-[#efefef] pl-[25px]">
                                <input aria-label="Količina" className="h-[40px] w-[250px] border-[3px] border-[#b0b0b6] bg-white" />
                                <UnitSelect label="Iz jedinice" className="ml-[7px] w-[175px]" />
                                <span className="w-[65px] text-center text-[36px] leading-[40px]">=</span>
                                <input aria-label="Rezultat" disabled className="h-[40px] w-[250px] border-[3px] border-[#b0b0b6] bg-[#efefef]" />
                                <UnitSelect label="U jedinicu" className="ml-[8px] w-[174px]" />
                            </div>
                        </Panel>
                        <div className="flex flex-col gap-[14px] pt-[10px] text-[28px] font-bold leading-[34px]">
                            <button className="h-[58px] w-[248px] border-4 border-[#0078d7] bg-[#e1e1e1]">Preračunaj</button>
                            <button className="h-[53px] w-[248px] border-2 border-[#adadad] bg-[#e1e1e1]">Dimenzije</button>
                        </div>
                    </div>
                </div>
            </div>
        </section>
    )
}

export default function App() {
    return (
        <div className="flex min-h-screen flex-col bg-[#efefef] font-['Noto_Sans',sans-serif] text-black">
            <GradientDefs />
            <TitleBar />
            <MenuBar />
            <TopToolbar />
            <main className="flex flex-1 pr-[4px]">
                <SideToolbar />
                <div className="flex-1 border-l-[7px] border-t-[3px] border-[#8a8a8a] bg-[#ababab]">
                    <UnitsWindow />
                </div>
            </main>
            <div className="h-[10px] border-y-[2px] border-white" />
            <StatusBar />
        </div>
    )
}
